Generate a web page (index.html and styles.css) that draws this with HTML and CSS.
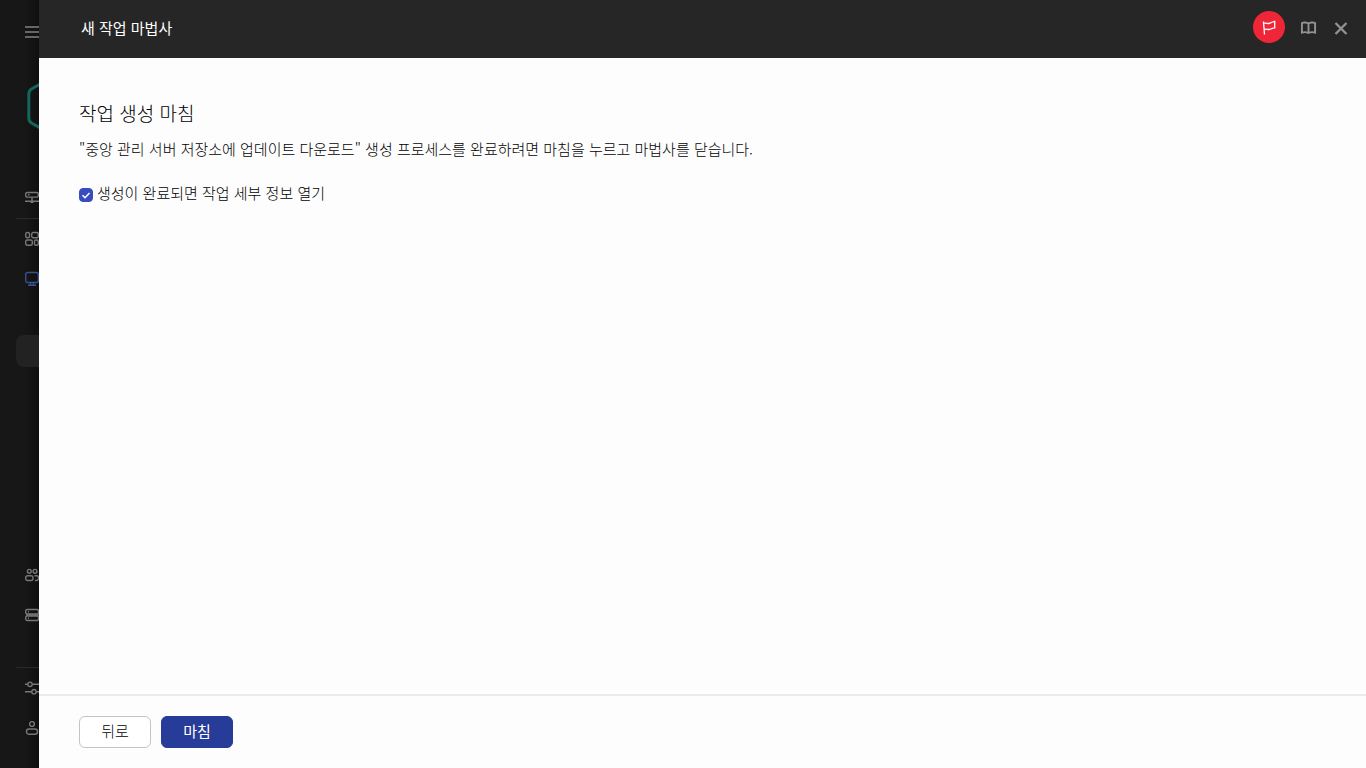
FILE: index.html
```
<!DOCTYPE html>
<html lang="ko">
<head>
  <meta charset="UTF-8">
  <meta name="viewport" content="width=device-width, initial-scale=1.0">
  <title>새 작업 마법사</title>
  <link rel="stylesheet" href="styles.css">
</head>
<body>
  <div class="app">
    <aside class="sidebar">
      <button class="menu-toggle" type="button" aria-label="메뉴">
        <svg class="icon" viewBox="0 0 16 16"><path d="M0 3h16M0 8h16M0 13h16" stroke-width="1.8"/></svg>
      </button>
      <svg class="logo" viewBox="0 0 52 58"><path d="M26 0 4.500 12Q1.800 13.500 1.800 17v24q0 3.500 2.700 5L26 58 47.500 46q2.700-1.500 2.700-5V17q0-3.500-2.700-5z"/></svg>
      <nav class="nav">
        <a class="nav-item" href="#" aria-label="서버">
          <svg class="icon" viewBox="0 0 16 16"><rect x=".7" y="2.500" width="12.600" height="4.600" rx="1.500"/><path d="M3 4.800h1.500M7 7v6M0 11.300h14M5.500 12.300h3"/></svg>
        </a>
        <hr class="nav-line">
        <a class="nav-item" href="#" aria-label="대시보드">
          <svg class="icon" viewBox="0 0 16 16"><rect x=".7" y="1.500" width="3.800" height="5.300" rx="1.500"/><rect x="6.700" y="1.500" width="6.600" height="5.300" rx="1.500"/><rect x=".7" y="9" width="6.600" height="5.300" rx="1.500"/><rect x="9.500" y="9" width="3.800" height="5.300" rx="1.500"/></svg>
        </a>
        <a class="nav-item current" href="#" aria-label="자산">
          <svg class="icon" viewBox="0 0 16 16"><rect x=".7" y="1.500" width="12.600" height="10" rx="2"/><path d="M5.500 11.500v2.500M8.500 11.500v2.500M3 14.300h8"/></svg>
        </a>
        <a class="nav-sub" href="#" aria-label="작업"></a>
      </nav>
      <nav class="nav nav-bottom">
        <a class="nav-item" href="#" aria-label="사용자">
          <svg class="icon" viewBox="0 0 16 16"><circle cx="4.300" cy="4.300" r="1.900"/><circle cx="10" cy="4.300" r="1.900"/><rect x=".7" y="8.800" width="7.300" height="4.700" rx="2"/><path d="M9.500 8.800h2q2 0 2 2v.7q0 2-2 2h-1.500"/></svg>
        </a>
        <a class="nav-item" href="#" aria-label="저장소">
          <svg class="icon" viewBox="0 0 16 16"><rect x=".7" y="2.500" width="12.800" height="4.500" rx="1.500"/><rect x=".7" y="9" width="12.800" height="4.500" rx="1.500"/><path d="M3 4.700h1M3 11.200h1M1 8h13"/></svg>
        </a>
        <hr class="nav-line nav-line-far">
        <a class="nav-item" href="#" aria-label="설정">
          <svg class="icon" viewBox="0 0 16 16"><path d="M0 4.300h2.700M7.300 4.300H16M0 11.700h6.700M11.300 11.700H16"/><circle cx="5" cy="4.300" r="2.200"/><circle cx="9" cy="11.700" r="2.200"/></svg>
        </a>
        <a class="nav-item" href="#" aria-label="계정">
          <svg class="icon" viewBox="0 0 16 16"><circle cx="7" cy="4" r="2.400"/><rect x="1.500" y="9" width="11" height="5.300" rx="2.500"/></svg>
        </a>
      </nav>
    </aside>

    <section class="wizard">
      <header class="wizard-header">
        <h1>새 작업 마법사</h1>
        <div class="header-actions">
          <button class="flag-btn" type="button" aria-label="알림">
            <svg class="icon" viewBox="0 0 16 16"><path d="M2.500 2.500 3.500 15.500M2 4.500c2.500-1 4 .2 6 0s3-2 5.700-2.200v6.500C11 8.800 10 10.500 8 10.500S5 9.700 3.200 10.500" stroke-width="1.300"/></svg>
          </button>
          <button class="icon-btn" type="button" aria-label="도움말">
            <svg class="icon" viewBox="0 0 16 16"><path d="M7.500 3.500V13M7.500 3.500C6 2.200 2.500 2.200 .9 3v9.700c2-.7 5-.5 6.600.3 1.600-.8 4.600-1 6.600-.3V3C12.500 2.200 9 2.200 7.500 3.500z" stroke-width="1.900"/></svg>
          </button>
          <button class="icon-btn" type="button" aria-label="닫기">
            <svg class="icon" viewBox="0 0 16 16"><path d="m2.500 3 11 11M13.500 3l-11 11" stroke-width="2.300"/></svg>
          </button>
        </div>
      </header>

      <main class="wizard-body">
        <h2>작업 생성 마침</h2>
        <p>"중앙 관리 서버 저장소에 업데이트 다운로드" 생성 프로세스를 완료하려면 마침을 누르고 마법사를 닫습니다.</p>
        <div class="check-row">
          <span class="checkbox">
            <input type="checkbox" id="open-details" checked>
            <svg class="check-mark" viewBox="0 0 14 14"><path d="m3.500 7.200 2.500 2.500 4.500-4.700"/></svg>
          </span>
          <label for="open-details">생성이 완료되면 작업 세부 정보 열기</label>
        </div>
      </main>

      <footer class="wizard-footer">
        <button class="btn" type="button">뒤로</button>
        <button class="btn btn-primary" type="button">마침</button>
      </footer>
    </section>
  </div>
</body>
</html>
```

FILE: styles.css
```
* {
  margin: 0;
  padding: 0;
  box-sizing: border-box;
}

body {
  font-family: "Noto Sans CJK KR", sans-serif;
  font-size: 15px;
  font-weight: 300;
  line-height: 20px;
  color: #000;
  background: #171717;
}

button {
  font: inherit;
  border: none;
  background: none;
  cursor: pointer;
}

.app {
  display: flex;
  min-height: 100vh;
}

.icon {
  display: block;
  flex-shrink: 0;
  width: 16px;
  height: 16px;
  fill: none;
  stroke: currentColor;
  stroke-width: 1.4;
}

/* Sidebar, mostly covered by the wizard */
.sidebar {
  display: flex;
  flex-direction: column;
  flex: 0 0 39px;
  overflow: hidden;
  padding: 24px 0 24px 16px;
  color: #777;
  background: linear-gradient(90deg, #171717 24px, #101010);
}

.menu-toggle {
  padding-left: 9px;
  color: #666;
}

.logo {
  flex-shrink: 0;
  width: 52px;
  height: 58px;
  margin: 37px 0 0 11px;
  fill: none;
  stroke: #14665a;
  stroke-width: 3;
}

.nav {
  display: flex;
  flex-direction: column;
  gap: 8px;
  margin-top: 47px;
}

.nav-bottom {
  margin-top: auto;
}

.nav-item {
  display: flex;
  align-items: center;
  height: 32px;
  padding-left: 9px;
  color: inherit;
}

.nav-item.current {
  color: #37508f;
}

.nav-line {
  height: 1px;
  margin: -4px 0;
  border: none;
  background: #292929;
}

.nav-line-far {
  margin-top: 28px;
}

.nav-sub {
  height: 32px;
  margin-top: 32px;
  border-radius: 8px 0 0 8px;
  background: #222;
}

/* Wizard */
.wizard {
  display: flex;
  flex-direction: column;
  flex: 1;
  min-width: 0;
  background: #fdfdfd;
}

.wizard-header {
  display: flex;
  align-items: center;
  justify-content: space-between;
  height: 58px;
  padding: 0 17px 2px 42px;
  color: #fff;
  background: #262626;
}

.wizard-header h1 {
  font-size: 15px;
  font-weight: 400;
}

.header-actions {
  display: flex;
  align-items: center;
  gap: 16px;
}

.flag-btn {
  display: flex;
  align-items: center;
  justify-content: center;
  width: 32px;
  height: 32px;
  margin-bottom: 2px;
  border-radius: 50%;
  color: #fff;
  background: #ef2637;
}

.icon-btn {
  color: #929292;
}

.wizard-body {
  flex: 1;
  padding: 41px 40px;
}

.wizard-body h2 {
  margin-bottom: 12px;
  font-size: 19px;
  font-weight: 300;
  line-height: 28px;
}

.check-row {
  display: flex;
  align-items: center;
  gap: 4px;
  margin-top: 24px;
}

.checkbox {
  display: grid;
  margin-top: 4px;
}

.checkbox input,
.check-mark {
  grid-area: 1 / 1;
  width: 14px;
  height: 14px;
}

.checkbox input {
  appearance: none;
  border: 1px solid #999;
  border-radius: 4px;
}

.checkbox input:checked {
  border-color: #384cc0;
  background: #384cc0;
}

.check-mark {
  visibility: hidden;
  fill: none;
  stroke: #fff;
  stroke-width: 1.5;
  pointer-events: none;
}

.checkbox input:checked + .check-mark {
  visibility: visible;
}

.wizard-footer {
  display: flex;
  gap: 10px;
  padding: 20px 40px;
  border-top: 2px solid #ebebeb;
}

.btn {
  width: 72px;
  height: 32px;
  padding-bottom: 2px;
  border: 1px solid #c4c4c4;
  border-radius: 6px;
  font-weight: 300;
  color: #000;
  background: #fff;
}

.btn-primary {
  border-color: #273b98;
  font-weight: 400;
  color: #fff;
  background: #273b98;
}
```
